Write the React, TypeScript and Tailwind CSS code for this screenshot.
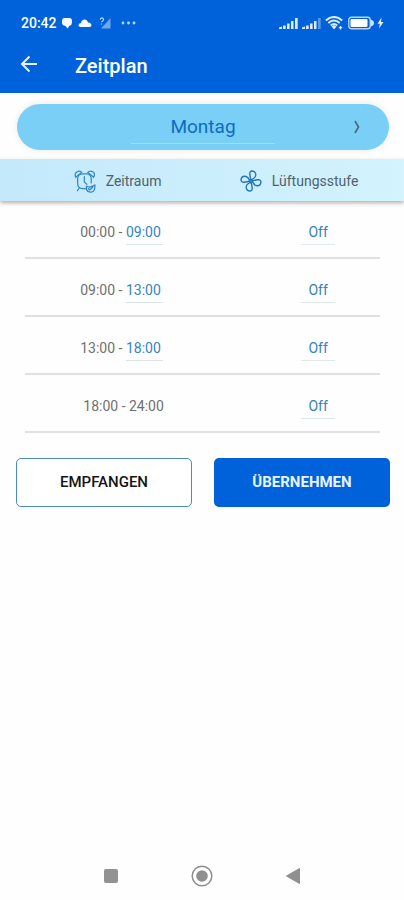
import React, { useState } from 'react';

const SLOTS = [
  { from: '00:00', to: '09:00', level: 'Off', editable: true },
  { from: '09:00', to: '13:00', level: 'Off', editable: true },
  { from: '13:00', to: '18:00', level: 'Off', editable: true },
  { from: '18:00', to: '24:00', level: 'Off', editable: false },
];

const DAYS = ['Montag', 'Dienstag', 'Mittwoch', 'Donnerstag', 'Freitag', 'Samstag', 'Sonntag'];

const LEVELS = ['Off', '1', '2', '3'];

const SignalBars: React.FC<{ faded?: boolean }> = ({ faded }) => (
  <svg width="19" height="13" viewBox="0 0 19 13" fill="#dbeafc" aria-hidden="true">
    <path d="M0 10.500L3 9.500V12H0zM4 8.500h2.700V12H4zM8 6.500h2.600V12H8zM12 4h2.500v8H12z" />
    <path d="M16 1h2.700v11H16z" opacity={faded ? 0.4 : 1} />
  </svg>
);

const StatusBar: React.FC = () => (
  <div className="flex h-[46px] items-center justify-between pl-[21px] pr-5 text-white">
    <div className="flex items-center">
      <span className="text-sm font-medium">20:42</span>
      <svg className="ml-1" width="12" height="12" viewBox="0 0 12 12" fill="#f4f8ff" aria-hidden="true">
        <path d="M3.500 1h5Q11 1 11 4v1.500Q11 8 8.500 8.800L6.500 11.500 4.500 9Q1 8.500 1 5.500V4Q1 1 3.500 1z" />
      </svg>
      <svg className="ml-[5px]" width="14" height="12" viewBox="0 0 14 12" fill="#f4f8ff" aria-hidden="true">
        <path d="M2.500 10Q.5 10 .5 8.200.5 6.500 3 6 3.500 2.500 6.500 2.500 9.200 2.500 10 5.500 13.500 6 13.500 8.300 13.500 10 11.500 10z" />
      </svg>
      <svg className="ml-[7px]" width="12" height="12" viewBox="0 0 12 12" fill="none" aria-hidden="true">
        <path d="M11.500 1v10.500H2z" fill="#6fa7ee" />
        <path d="M1 2.500Q2.500 0 4 1.500T2.500 5M2.500 6.500v1" stroke="#bcd8fa" strokeWidth="1.200" />
      </svg>
      <svg className="ml-2.5" width="15" height="4" viewBox="0 0 15 4" fill="#bcd8fa" aria-hidden="true">
        <circle cx="2" cy="2" r="1.400" />
        <circle cx="7.500" cy="2" r="1.400" />
        <circle cx="13" cy="2" r="1.400" />
      </svg>
    </div>
    <div className="flex items-center">
      <SignalBars />
      <span className="ml-1 flex">
        <SignalBars faded />
      </span>
      <svg className="ml-1" width="18" height="14" viewBox="0 0 18 14" fill="none" stroke="#dbeafc" aria-hidden="true">
        <path d="M.8 4.500Q9-2.500 17.200 4.500M3.300 7Q9 2 14.700 7M5.800 9.500Q9 6.500 12.200 9.500" strokeWidth="2" />
        <path d="M6.500 10.500L9 9l2.500 1.500L9 13.500z" fill="#dbeafc" stroke="none" />
        <path d="M15.500 10v3.500M13.800 11.700h3.400" strokeWidth="1.300" />
      </svg>
      <svg className="ml-[5px]" width="27" height="14" viewBox="0 0 27 14" fill="none" aria-hidden="true">
        <rect x=".8" y="1.300" width="21.400" height="11.400" rx="2.500" stroke="#b5d3f8" strokeWidth="1.400" />
        <rect x="2.500" y="3" width="17" height="8" rx="1" fill="#fff" />
        <path d="M22.500 3.500q3.500 1 3.500 3.500t-3.500 3.500z" fill="#cfe3fb" />
      </svg>
      <svg className="ml-0.5" width="7" height="12" viewBox="0 0 7 12" fill="#e3effc" aria-hidden="true">
        <path d="M4.500.5L.5 6.700h2.300L2 11.500 6.500 5H4z" />
      </svg>
    </div>
  </div>
);

const ClockIcon: React.FC = () => (
  <svg width="22" height="23" viewBox="0 0 23 24" fill="none" stroke="#3687c4" strokeWidth="1.300" strokeLinecap="round" aria-hidden="true">
    <path d="M18 13.500V8.500Q17.500 4 13 4H9Q4 4 3.800 9v5q.2 5 5 5.500h3" />
    <path d="M1.800 7.500Q.2 3.500 3 2.200 6-.2 8 2.500zM20.500 7.500Q22.500 4 20 2.200 17-.2 14.500 2.500z" />
    <path d="M10.800 7v5.500l2.700 2.500M5.500 18.500l-2 3.200" />
    <path d="M13 17q3.500 2 8.800-1.200.5 5.700-3 7-4.300 1-5.800-2.300zM15 19.500l1.500 1.200 3-2.700" />
  </svg>
);

const FanIcon: React.FC = () => {
  const blade = 'M10.800 9.800L9.800 4.500Q9.500 1 12.200 1q3.800.5 3.600 4-.3 3.300-5 4.800z';
  return (
    <svg width="22" height="22" viewBox="0 0 22 22" fill="none" stroke="#2376bd" strokeWidth="1.400" strokeLinejoin="round" aria-hidden="true">
      <circle cx="11" cy="11" r="1.200" />
      <path d={blade} />
      <path d={blade} transform="rotate(90 11 11)" />
      <path d={blade} transform="rotate(180 11 11)" />
      <path d={blade} transform="rotate(270 11 11)" />
    </svg>
  );
};

const ScheduleTable: React.FC = () => (
  <table className="mt-[9px] w-full table-fixed border-collapse text-sm">
    <thead className="bg-gradient-to-r from-[#c3e9fb] to-[#d3f3fd] shadow-[0_2px_4px_rgba(90,80,70,0.45)]">
      <tr>
        <th scope="col" className="w-[54%] p-0 font-normal text-[#50626d]">
          <div className="ml-[25px] flex h-[42px] items-center justify-center gap-2.5 pr-2 pt-0.5">
            <ClockIcon />
            Zeitraum
          </div>
        </th>
        <th scope="col" className="p-0 font-normal text-[#50626d]">
          <div className="mr-6 flex h-[42px] items-center justify-center gap-2.5 pt-0.5">
            <FanIcon />
            Lüftungsstufe
          </div>
        </th>
      </tr>
    </thead>
    <tbody>
      {SLOTS.map((slot) => (
        <tr key={slot.from}>
          <td className="p-0">
            <div className="ml-[25px] flex h-[58px] items-center justify-center border-b-2 border-[#e0e0e0] pt-1.5 text-[#707070]">
              {slot.editable ? (
                <>
                  <span className="whitespace-pre">{slot.from} - </span>
                  <input
                    type="text"
                    aria-label={`Ende des Zeitraums ab ${slot.from}`}
                    defaultValue={slot.to}
                    className="h-[26px] w-[37px] border-b border-[#dbe6ea] bg-transparent text-[#3385c8] outline-none"
                  />
                </>
              ) : (
                <span className="pl-1">
                  {slot.from} - {slot.to}
                </span>
              )}
            </div>
          </td>
          <td className="p-0">
            <div className="mr-6 flex h-[58px] items-center justify-center border-b-2 border-[#e0e0e0] pl-[38px] pt-1.5">
              <select
                aria-label={`Lüftungsstufe ab ${slot.from}`}
                defaultValue={slot.level}
                className="h-[26px] w-[34px] appearance-none border-b border-[#dfe8ea] bg-transparent text-center text-[#3580be] outline-none"
              >
                {LEVELS.map((level) => (
                  <option key={level}>{level}</option>
                ))}
              </select>
            </div>
          </td>
        </tr>
      ))}
    </tbody>
  </table>
);

const NavBar: React.FC = () => (
  <nav className="mt-auto flex h-12 items-center justify-center gap-[67px]">
    <button type="button" aria-label="Übersicht" className="flex w-6 justify-center">
      <svg width="16" height="16" viewBox="0 0 16 16">
        <rect x="1" y="1" width="14" height="14" rx="2" fill="#929292" />
      </svg>
    </button>
    <button type="button" aria-label="Startseite" className="flex w-6 justify-center">
      <svg width="22" height="22" viewBox="0 0 22 22">
        <circle cx="11" cy="11" r="9.800" fill="none" stroke="#8f8f8f" strokeWidth="1.500" />
        <circle cx="11" cy="11" r="5.800" fill="#8f8f8f" />
      </svg>
    </button>
    <button type="button" aria-label="Zurück" className="flex w-6 justify-center">
      <svg width="16" height="18" viewBox="0 0 16 18">
        <path d="M1.500 9L14.500 1.500v15z" fill="#8f8f8f" stroke="#8f8f8f" strokeLinejoin="round" />
      </svg>
    </button>
  </nav>
);

const App: React.FC = () => {
  const [day, setDay] = useState(0);

  return (
    <div className="flex min-h-screen flex-col bg-[#fefefe] font-['Roboto',sans-serif]">
      <header className="bg-[#0062db] pb-2">
        <StatusBar />
        <div className="flex h-[39px] items-center pl-5 text-white">
          <button type="button" aria-label="Zurück" className="flex pb-1">
            <svg width="18" height="18" viewBox="0 0 18 18" fill="none" stroke="#e6f0fd" strokeWidth="2">
              <path d="M17 9H2M9.500 1.500L2 9l7.500 7.500" />
            </svg>
          </button>
          <h1 className="ml-[37px] text-xl font-medium">Zeitplan</h1>
        </div>
      </header>

      <main>
        <div className="pl-[17px] pr-[15px] pt-[11px]">
          <button
            type="button"
            onClick={() => setDay((day + 1) % DAYS.length)}
            className="grid h-[46px] w-full grid-cols-[1fr_144px_1fr] items-center rounded-full bg-[#79cff5] shadow-[0_0_6px_rgba(120,110,130,0.15)]"
          >
            <span className="col-start-2 border-b border-[#a9dcf3] text-[19px] leading-8 text-[#0f6bc4]">
              {DAYS[day]}
            </span>
            <svg className="mr-7 justify-self-end" width="8" height="14" viewBox="0 0 8 14" fill="none" stroke="#44687d" strokeWidth="1.600" aria-hidden="true">
              <path d="M2 1l3.500 6L2 13" />
            </svg>
          </button>
        </div>

        <ScheduleTable />

        <div className="grid grid-cols-2 gap-[22px] px-4 pt-[25px] pr-3.5 text-[15px]">
          <button type="button" className="h-[49px] rounded-[5px] border border-[#4a8cba] bg-white font-medium text-[#151515]">
            EMPFANGEN
          </button>
          <button type="button" className="h-[49px] rounded-[5px] bg-[#0062db] font-bold text-[#eaf3ff]">
            ÜBERNEHMEN
          </button>
        </div>
      </main>

      <NavBar />
    </div>
  );
};

export default App;
